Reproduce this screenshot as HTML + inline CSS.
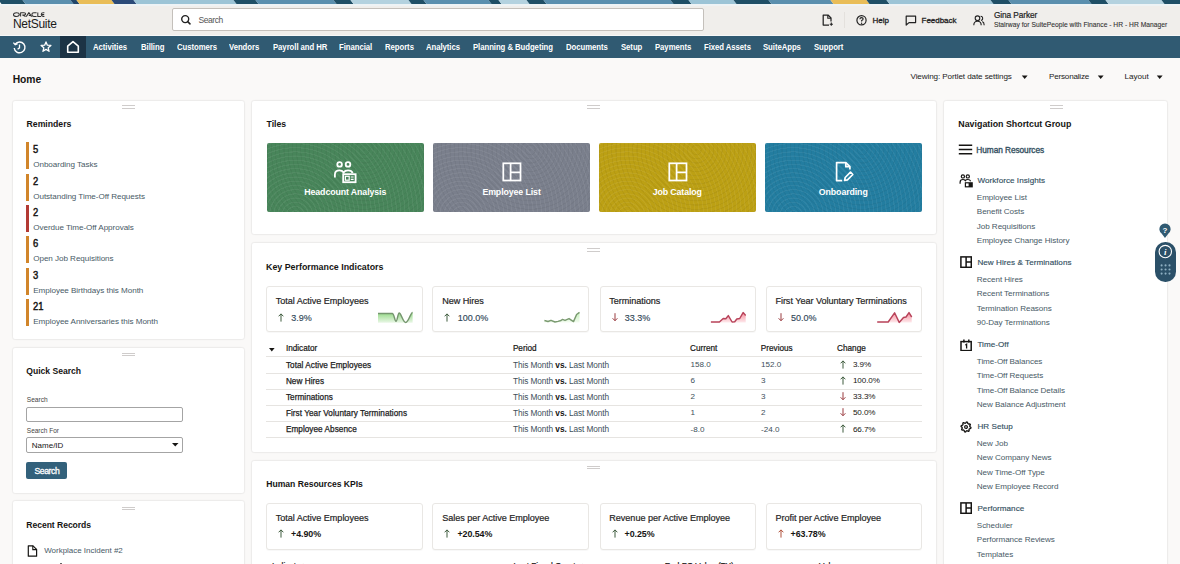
<!DOCTYPE html>
<html><head><meta charset="utf-8"><style>
html,body{margin:0;padding:0;width:1180px;height:564px;overflow:hidden;background:#faf9f8;}
body{position:relative;font-family:"Liberation Sans",sans-serif;}
.t{position:absolute;white-space:nowrap;line-height:1;}
.r{position:absolute;display:block;}
.tile{position:absolute;border-radius:2px;overflow:hidden;}
.sub{position:absolute;background:#fff;border:1px solid #e9e7e4;border-radius:3px;box-sizing:border-box;box-shadow:0 1px 1px rgba(0,0,0,0.03);}
.card{position:absolute;background:#fff;border-radius:2px;box-shadow:0 0 0 1px rgba(0,0,0,0.03),0 0 3px rgba(0,0,0,0.06);}
</style></head><body>
<svg class="r" style="left:0;top:0" width="1180" height="4" viewBox="0 0 1180 4"><polygon points="-1.5,0 22.5,0 25.5,4 1.5,4" fill="#1f4f66"/><polygon points="22.5,0 70.5,0 73.5,4 25.5,4" fill="#5a8fae"/><polygon points="70.5,0 76.5,0 79.5,4 73.5,4" fill="#21466a"/><polygon points="76.5,0 111.5,0 114.5,4 79.5,4" fill="#e9bd58"/><polygon points="111.5,0 133.5,0 136.5,4 114.5,4" fill="#2b4a78"/><polygon points="133.5,0 233.5,0 236.5,4 136.5,4" fill="#9cc4d6"/><polygon points="233.5,0 255.5,0 258.5,4 236.5,4" fill="#1f4f66"/><polygon points="255.5,0 333.5,0 336.5,4 258.5,4" fill="#5a8fae"/><polygon points="333.5,0 350.5,0 353.5,4 336.5,4" fill="#1f4f66"/><polygon points="350.5,0 408.5,0 411.5,4 353.5,4" fill="#b4d2df"/><polygon points="408.5,0 423.5,0 426.5,4 411.5,4" fill="#1f4f66"/><polygon points="423.5,0 488.5,0 491.5,4 426.5,4" fill="#5a8fae"/><polygon points="488.5,0 498.5,0 501.5,4 491.5,4" fill="#1f4f66"/><polygon points="498.5,0 526.5,0 529.5,4 501.5,4" fill="#b4d2df"/><polygon points="526.5,0 543.5,0 546.5,4 529.5,4" fill="#1f4f66"/><polygon points="543.5,0 670.5,0 673.5,4 546.5,4" fill="#5a8fae"/><polygon points="670.5,0 688.5,0 691.5,4 673.5,4" fill="#1f4f66"/><polygon points="688.5,0 733.5,0 736.5,4 691.5,4" fill="#9cc4d6"/><polygon points="733.5,0 768.5,0 771.5,4 736.5,4" fill="#1f4f66"/><polygon points="768.5,0 830.5,0 833.5,4 771.5,4" fill="#5a8fae"/><polygon points="830.5,0 866.5,0 869.5,4 833.5,4" fill="#e9bd58"/><polygon points="866.5,0 886.5,0 889.5,4 869.5,4" fill="#1f4f66"/><polygon points="886.5,0 990.5,0 993.5,4 889.5,4" fill="#9cc4d6"/><polygon points="990.5,0 1008.5,0 1011.5,4 993.5,4" fill="#1f4f66"/><polygon points="1008.5,0 1088.5,0 1091.5,4 1011.5,4" fill="#5a8fae"/><polygon points="1088.5,0 1105.5,0 1108.5,4 1091.5,4" fill="#1f4f66"/><polygon points="1105.5,0 1161.5,0 1164.5,4 1108.5,4" fill="#b4d2df"/><polygon points="1161.5,0 1188.5,0 1191.5,4 1164.5,4" fill="#1f4f66"/></svg>
<div class="r" style="left:0px;top:4px;width:1180px;height:1.5px;background:#eef3f5;"></div>
<div class="r" style="left:0px;top:5.5px;width:1180px;height:30.5px;background:#f0eeeb;"></div>
<div class="r" style="left:0px;top:34.5px;width:1180px;height:1.5px;background:#f7f8f8;"></div>
<svg class="r" style="left:12.6px;top:11.6px;" width="32" height="6" viewBox="0 0 32 6"><g fill="none" stroke="#333" stroke-width="1.05" stroke-linejoin="round"><ellipse cx="3.4" cy="2.6" rx="2.9" ry="1.95"/><path d="M7.6 4.6 V0.65 H11 Q12.6 0.65 12.6 1.85 Q12.6 3.05 11 3.05 H9.6 L12.6 4.6"/><path d="M13.2 4.6 L15.9 0.65 L18.6 4.6 M15.8 3.4 H17.6"/><path d="M23.6 0.65 H21 A2.1 1.95 0 0 0 21 4.55 H23.6"/><path d="M24.8 0.4 V4.55 H28"/><path d="M31.4 0.65 H30.2 A1.95 1.95 0 0 0 30.2 4.55 H31.4 M28.9 2.6 H31.2"/></g></svg>
<div class="t" style="left:13px;top:17.80px;font-size:12px;color:#1a1a1a;letter-spacing:-0.3px;">NetSuite</div>
<div class="r" style="left:172px;top:8px;width:530px;height:21px;background:#fff;border:1px solid #c4c0bb;border-radius:2px;"></div>
<svg class="r" style="left:180px;top:14px;" width="12" height="12" viewBox="0 0 12 12"><circle cx="5.2" cy="5.1" r="3.5" fill="none" stroke="#222" stroke-width="1.4"/><path d="M7.7 7.6 L10 9.9" stroke="#222" stroke-width="1.5" stroke-linecap="round"/></svg>
<div class="t" style="left:198.5px;top:15.97px;font-size:8.5px;color:#555;letter-spacing:-0.45px;">Search</div>
<svg class="r" style="left:821px;top:14px;" width="13" height="12" viewBox="0 0 13 12"><path d="M8 11 H2.2 V1 H7 L10 4 V7.6" fill="none" stroke="#222" stroke-width="1.25" stroke-linejoin="round"/><path d="M6.8 1 V4.2 H10" fill="none" stroke="#222" stroke-width="1.1"/><path d="M10.3 8.6 V11.8 M8.7 10.2 H11.9" stroke="#222" stroke-width="1.1"/></svg>
<div class="r" style="left:843.5px;top:12px;width:1px;height:16px;background:#e4e1dd;"></div>
<svg class="r" style="left:856px;top:15px;" width="12" height="11" viewBox="0 0 12 11"><circle cx="5.5" cy="5.3" r="4.6" fill="none" stroke="#222" stroke-width="1.2"/><path d="M3.9 4.2 Q3.9 2.6 5.5 2.6 Q7.1 2.6 7.1 4 Q7.1 5 5.6 5.6 V6.6" fill="none" stroke="#222" stroke-width="1.1"/><circle cx="5.6" cy="8.2" r="0.7" fill="#222"/></svg>
<div class="t" style="left:872.5px;top:16.60px;font-size:8px;color:#222;letter-spacing:0px;-webkit-text-stroke:0.3px #222;">Help</div>
<svg class="r" style="left:905px;top:15px;" width="12" height="11" viewBox="0 0 12 11"><path d="M1.2 1.2 H10.6 V7.6 H4 L1.2 10 Z" fill="none" stroke="#222" stroke-width="1.2" stroke-linejoin="round"/></svg>
<div class="t" style="left:921.6px;top:16.60px;font-size:8px;color:#222;letter-spacing:-0.05px;-webkit-text-stroke:0.3px #222;">Feedback</div>
<svg class="r" style="left:973px;top:15px;" width="12" height="11" viewBox="0 0 12 11"><circle cx="4.5" cy="3.2" r="2.3" fill="none" stroke="#222" stroke-width="1.1"/><path d="M0.8 10.3 Q0.8 6.3 4.5 6.3 Q8.2 6.3 8.2 10.3" fill="none" stroke="#222" stroke-width="1.1"/><path d="M7.6 1.2 Q10 1.5 9.6 4 Q9.3 5.2 8 5.5 M9.3 6.6 Q11.2 7.5 11.2 10.3" fill="none" stroke="#222" stroke-width="1.1"/></svg>
<div class="t" style="left:994px;top:10.75px;font-size:8.3px;color:#222;letter-spacing:-0.1px;-webkit-text-stroke:0.2px #222;">Gina Parker</div>
<div class="t" style="left:994px;top:22.11px;font-size:6.7px;color:#333;letter-spacing:0.02px;-webkit-text-stroke:0.1px #333;">Stairway for SuitePeople with Finance - HR - HR Manager</div>
<div class="r" style="left:0px;top:36px;width:1180px;height:22px;background:#305a72;"></div>
<div class="r" style="left:59.5px;top:36px;width:26px;height:22px;background:#1c3345;"></div>
<svg class="r" style="left:12px;top:40px;" width="15" height="15" viewBox="0 0 15 15"><path d="M3.2 4.2 A5.4 5.4 0 1 1 2.2 8" fill="none" stroke="#fff" stroke-width="1.4"/><path d="M1.4 2.6 L3.2 4.6 L5.6 3.6" fill="none" stroke="#fff" stroke-width="1.3"/><path d="M7.5 4.5 V7.8 L5.6 9.2" fill="none" stroke="#fff" stroke-width="1.3"/></svg>
<svg class="r" style="left:40px;top:40.5px;" width="12" height="12" viewBox="0 0 12 12"><path d="M6 0.9 L7.35 4.2 L10.9 4.45 L8.2 6.8 L9.05 10.3 L6 8.4 L2.95 10.3 L3.8 6.8 L1.1 4.45 L4.65 4.2 Z" fill="none" stroke="#fff" stroke-width="1.3" stroke-linejoin="round"/></svg>
<svg class="r" style="left:66px;top:40px;" width="14" height="14" viewBox="0 0 14 14"><path d="M1.7 6.2 L7 1.6 L12.3 6.2 V12.3 H1.7 Z" fill="none" stroke="#fff" stroke-width="1.6" stroke-linejoin="round"/></svg>
<div class="t" style="left:93.3px;top:43.19px;font-size:8.6px;font-weight:bold;color:#fff;letter-spacing:-0.05px;transform:scaleX(0.9);transform-origin:0 0;">Activities</div>
<div class="t" style="left:140.5px;top:43.19px;font-size:8.6px;font-weight:bold;color:#fff;letter-spacing:-0.05px;transform:scaleX(0.9);transform-origin:0 0;">Billing</div>
<div class="t" style="left:176.5px;top:43.19px;font-size:8.6px;font-weight:bold;color:#fff;letter-spacing:-0.05px;transform:scaleX(0.9);transform-origin:0 0;">Customers</div>
<div class="t" style="left:229px;top:43.19px;font-size:8.6px;font-weight:bold;color:#fff;letter-spacing:-0.05px;transform:scaleX(0.9);transform-origin:0 0;">Vendors</div>
<div class="t" style="left:272.5px;top:43.19px;font-size:8.6px;font-weight:bold;color:#fff;letter-spacing:-0.05px;transform:scaleX(0.9);transform-origin:0 0;">Payroll and HR</div>
<div class="t" style="left:338.7px;top:43.19px;font-size:8.6px;font-weight:bold;color:#fff;letter-spacing:-0.05px;transform:scaleX(0.9);transform-origin:0 0;">Financial</div>
<div class="t" style="left:384.5px;top:43.19px;font-size:8.6px;font-weight:bold;color:#fff;letter-spacing:-0.05px;transform:scaleX(0.9);transform-origin:0 0;">Reports</div>
<div class="t" style="left:426px;top:43.19px;font-size:8.6px;font-weight:bold;color:#fff;letter-spacing:-0.05px;transform:scaleX(0.9);transform-origin:0 0;">Analytics</div>
<div class="t" style="left:473px;top:43.19px;font-size:8.6px;font-weight:bold;color:#fff;letter-spacing:-0.05px;transform:scaleX(0.9);transform-origin:0 0;">Planning &amp; Budgeting</div>
<div class="t" style="left:565.6px;top:43.19px;font-size:8.6px;font-weight:bold;color:#fff;letter-spacing:-0.05px;transform:scaleX(0.9);transform-origin:0 0;">Documents</div>
<div class="t" style="left:620.5px;top:43.19px;font-size:8.6px;font-weight:bold;color:#fff;letter-spacing:-0.05px;transform:scaleX(0.9);transform-origin:0 0;">Setup</div>
<div class="t" style="left:655.3px;top:43.19px;font-size:8.6px;font-weight:bold;color:#fff;letter-spacing:-0.05px;transform:scaleX(0.9);transform-origin:0 0;">Payments</div>
<div class="t" style="left:704.4px;top:43.19px;font-size:8.6px;font-weight:bold;color:#fff;letter-spacing:-0.05px;transform:scaleX(0.9);transform-origin:0 0;">Fixed Assets</div>
<div class="t" style="left:762.9px;top:43.19px;font-size:8.6px;font-weight:bold;color:#fff;letter-spacing:-0.05px;transform:scaleX(0.9);transform-origin:0 0;">SuiteApps</div>
<div class="t" style="left:813.5px;top:43.19px;font-size:8.6px;font-weight:bold;color:#fff;letter-spacing:-0.05px;transform:scaleX(0.9);transform-origin:0 0;">Support</div>
<div class="r" style="left:0px;top:58px;width:1180px;height:506px;background:#faf9f8;"></div>
<div class="t" style="left:12.7px;top:75.25px;font-size:10.3px;font-weight:bold;color:#161513;letter-spacing:-0.05px;">Home</div>
<div class="t" style="left:910.5px;top:73.21px;font-size:8.1px;color:#222;letter-spacing:-0.1px;">Viewing: Portlet date settings</div>
<svg class="r" style="left:1020.6px;top:74.7px;" width="8" height="5" viewBox="0 0 8 5"><path d="M0.8 0.4 H6.6 L3.7 3.9 Z" fill="#161513"/></svg>
<div class="t" style="left:1049px;top:73.21px;font-size:8.1px;color:#222;letter-spacing:-0.2px;">Personalize</div>
<svg class="r" style="left:1096.8px;top:74.7px;" width="8" height="5" viewBox="0 0 8 5"><path d="M0.8 0.4 H6.6 L3.7 3.9 Z" fill="#161513"/></svg>
<div class="t" style="left:1124.6px;top:73.21px;font-size:8.1px;color:#222;letter-spacing:-0.05px;">Layout</div>
<svg class="r" style="left:1156.4px;top:74.7px;" width="8" height="5" viewBox="0 0 8 5"><path d="M0.8 0.4 H6.6 L3.7 3.9 Z" fill="#161513"/></svg>
<div class="card" style="left:13px;top:100.5px;width:231px;height:238.3px"></div>
<div class="r" style="left:122.0px;top:105px;width:13px;height:1px;background:#cfcccb;"></div>
<div class="r" style="left:122.0px;top:107.5px;width:13px;height:1px;background:#cfcccb;"></div>
<div class="t" style="left:26.6px;top:120.01px;font-size:8.7px;font-weight:bold;color:#161513;letter-spacing:-0.02px;">Reminders</div>
<div class="r" style="left:26px;top:142.3px;width:2.5px;height:27px;background:#d1852a;"></div>
<div class="t" style="left:33.2px;top:145.43px;font-size:10.2px;color:#161513;letter-spacing:0.1px;-webkit-text-stroke:0.45px #161513;transform:scaleX(0.92);transform-origin:0 0;">5</div>
<div class="t" style="left:33.2px;top:161.42px;font-size:8.1px;color:#485a66;letter-spacing:-0.05px;">Onboarding Tasks</div>
<div class="r" style="left:26px;top:173.6px;width:2.5px;height:27px;background:#d1852a;"></div>
<div class="t" style="left:33.2px;top:176.73px;font-size:10.2px;color:#161513;letter-spacing:0.1px;-webkit-text-stroke:0.45px #161513;transform:scaleX(0.92);transform-origin:0 0;">2</div>
<div class="t" style="left:33.2px;top:192.72px;font-size:8.1px;color:#485a66;letter-spacing:-0.05px;">Outstanding Time-Off Requests</div>
<div class="r" style="left:26px;top:204.9px;width:2.5px;height:27px;background:#b33a34;"></div>
<div class="t" style="left:33.2px;top:208.03px;font-size:10.2px;color:#161513;letter-spacing:0.1px;-webkit-text-stroke:0.45px #161513;transform:scaleX(0.92);transform-origin:0 0;">2</div>
<div class="t" style="left:33.2px;top:224.02px;font-size:8.1px;color:#485a66;letter-spacing:-0.05px;">Overdue Time-Off Approvals</div>
<div class="r" style="left:26px;top:236.2px;width:2.5px;height:27px;background:#d1852a;"></div>
<div class="t" style="left:33.2px;top:239.33px;font-size:10.2px;color:#161513;letter-spacing:0.1px;-webkit-text-stroke:0.45px #161513;transform:scaleX(0.92);transform-origin:0 0;">6</div>
<div class="t" style="left:33.2px;top:255.32px;font-size:8.1px;color:#485a66;letter-spacing:-0.05px;">Open Job Requisitions</div>
<div class="r" style="left:26px;top:267.5px;width:2.5px;height:27px;background:#d1852a;"></div>
<div class="t" style="left:33.2px;top:270.63px;font-size:10.2px;color:#161513;letter-spacing:0.1px;-webkit-text-stroke:0.45px #161513;transform:scaleX(0.92);transform-origin:0 0;">3</div>
<div class="t" style="left:33.2px;top:286.62px;font-size:8.1px;color:#485a66;letter-spacing:-0.05px;">Employee Birthdays this Month</div>
<div class="r" style="left:26px;top:298.8px;width:2.5px;height:27px;background:#d1852a;"></div>
<div class="t" style="left:33.2px;top:301.93px;font-size:10.2px;color:#161513;letter-spacing:0.1px;-webkit-text-stroke:0.45px #161513;transform:scaleX(0.92);transform-origin:0 0;">21</div>
<div class="t" style="left:33.2px;top:317.92px;font-size:8.1px;color:#485a66;letter-spacing:-0.05px;">Employee Anniversaries this Month</div>
<div class="card" style="left:13px;top:347.5px;width:231px;height:145px"></div>
<div class="r" style="left:122.0px;top:352.8px;width:13px;height:1px;background:#cfcccb;"></div>
<div class="r" style="left:122.0px;top:355.3px;width:13px;height:1px;background:#cfcccb;"></div>
<div class="t" style="left:26.3px;top:367.39px;font-size:8.6px;font-weight:bold;color:#161513;letter-spacing:-0.02px;">Quick Search</div>
<div class="t" style="left:26.8px;top:396.89px;font-size:6.6px;color:#444;">Search</div>
<div class="r" style="left:26.3px;top:406.5px;width:155px;height:13px;background:#fff;border:1px solid #a4a4a4;border-radius:2px;"></div>
<div class="t" style="left:26.8px;top:427.88px;font-size:6.5px;color:#444;">Search For</div>
<div class="r" style="left:26.3px;top:437.2px;width:155px;height:14px;background:#fff;border:1px solid #a4a4a4;border-radius:2px;"></div>
<div class="t" style="left:31.8px;top:441.50px;font-size:8px;color:#161513;">Name/ID</div>
<svg class="r" style="left:171.5px;top:443px;" width="7" height="4" viewBox="0 0 7 4"><path d="M0 0 H6.5 L3.25 3.5 Z" fill="#161513"/></svg>
<div class="r" style="left:26.3px;top:462px;width:41px;height:17px;background:#33617b;border-radius:2px;"></div>
<div class="t" style="left:34.5px;top:466.99px;font-size:8.6px;color:#fff;letter-spacing:-0.4px;-webkit-text-stroke:0.3px #fff;">Search</div>
<div class="card" style="left:13px;top:501.2px;width:231px;height:70px"></div>
<div class="r" style="left:122.0px;top:506.5px;width:13px;height:1px;background:#cfcccb;"></div>
<div class="r" style="left:122.0px;top:509.0px;width:13px;height:1px;background:#cfcccb;"></div>
<div class="t" style="left:26.3px;top:520.99px;font-size:8.6px;font-weight:bold;color:#161513;letter-spacing:-0.05px;">Recent Records</div>
<svg class="r" style="left:27px;top:545px;" width="11" height="12" viewBox="0 0 11 12"><path d="M1.3 0.8 H6 L9.6 4.4 V11.2 H1.3 Z" fill="none" stroke="#161513" stroke-width="1.2" stroke-linejoin="round"/><path d="M5.8 0.8 V4.6 H9.6" fill="none" stroke="#161513" stroke-width="1.1"/></svg>
<div class="t" style="left:44.2px;top:547.00px;font-size:8px;color:#485a66;letter-spacing:-0.02px;">Workplace Incident #2</div>
<div class="card" style="left:251.5px;top:100.5px;width:684px;height:133.5px"></div>
<div class="r" style="left:587.0px;top:105px;width:13px;height:1px;background:#cfcccb;"></div>
<div class="r" style="left:587.0px;top:107.5px;width:13px;height:1px;background:#cfcccb;"></div>
<div class="t" style="left:266.5px;top:119.61px;font-size:8.7px;font-weight:bold;color:#161513;">Tiles</div>
<div class="card" style="left:251.5px;top:242.7px;width:684px;height:209px"></div>
<div class="r" style="left:587.0px;top:248px;width:13px;height:1px;background:#cfcccb;"></div>
<div class="r" style="left:587.0px;top:250.5px;width:13px;height:1px;background:#cfcccb;"></div>
<div class="card" style="left:251.5px;top:460.5px;width:684px;height:120px"></div>
<div class="r" style="left:587.0px;top:465.5px;width:13px;height:1px;background:#cfcccb;"></div>
<div class="r" style="left:587.0px;top:468.0px;width:13px;height:1px;background:#cfcccb;"></div>
<div class="card" style="left:944px;top:100.5px;width:222.7px;height:480px"></div>
<div class="r" style="left:1049.5px;top:105.2px;width:13px;height:1px;background:#cfcccb;"></div>
<div class="r" style="left:1049.5px;top:107.7px;width:13px;height:1px;background:#cfcccb;"></div>
<div class="t" style="left:958.3px;top:120.18px;font-size:8.85px;font-weight:bold;color:#161513;">Navigation Shortcut Group</div>
<div class="tile" style="left:267px;top:143px;width:156.5px;height:68.7px;background:repeating-radial-gradient(circle at 18% 105%, rgba(255,255,255,0.055) 0 1px, rgba(255,255,255,0) 1.3px 4.2px), repeating-radial-gradient(circle at 62% 10%, rgba(0,0,0,0.045) 0 1px, rgba(0,0,0,0) 1.3px 4.2px),#48855a;"></div>
<div class="t" style="left:267px;top:187.82px;font-size:8.8px;font-weight:bold;color:#fff;letter-spacing:-0.1px;"><div style="width:156.5px;text-align:center">Headcount Analysis</div></div>
<div class="tile" style="left:433.3px;top:143px;width:156.5px;height:68.7px;background:repeating-radial-gradient(circle at 18% 105%, rgba(255,255,255,0.055) 0 1px, rgba(255,255,255,0) 1.3px 4.2px), repeating-radial-gradient(circle at 62% 10%, rgba(0,0,0,0.045) 0 1px, rgba(0,0,0,0) 1.3px 4.2px),#7a7f8c;"></div>
<div class="t" style="left:433.3px;top:187.82px;font-size:8.8px;font-weight:bold;color:#fff;letter-spacing:-0.1px;"><div style="width:156.5px;text-align:center">Employee List</div></div>
<div class="tile" style="left:599px;top:143px;width:156.5px;height:68.7px;background:repeating-radial-gradient(circle at 18% 105%, rgba(255,255,255,0.055) 0 1px, rgba(255,255,255,0) 1.3px 4.2px), repeating-radial-gradient(circle at 62% 10%, rgba(0,0,0,0.045) 0 1px, rgba(0,0,0,0) 1.3px 4.2px),#bca014;"></div>
<div class="t" style="left:599px;top:187.82px;font-size:8.8px;font-weight:bold;color:#fff;letter-spacing:-0.1px;"><div style="width:156.5px;text-align:center">Job Catalog</div></div>
<div class="tile" style="left:765px;top:143px;width:156.5px;height:68.7px;background:repeating-radial-gradient(circle at 18% 105%, rgba(255,255,255,0.055) 0 1px, rgba(255,255,255,0) 1.3px 4.2px), repeating-radial-gradient(circle at 62% 10%, rgba(0,0,0,0.045) 0 1px, rgba(0,0,0,0) 1.3px 4.2px),#237da0;"></div>
<div class="t" style="left:765px;top:187.82px;font-size:8.8px;font-weight:bold;color:#fff;letter-spacing:-0.1px;"><div style="width:156.5px;text-align:center">Onboarding</div></div>
<svg class="r" style="left:333px;top:160px;" width="25" height="24" viewBox="0 0 25 24"><g fill="none" stroke="#fff" stroke-width="1.8"><circle cx="6.6" cy="4.4" r="2.3"/><circle cx="15" cy="4.4" r="2.3"/><path d="M1.9 17.5 V14.6 Q1.9 10.4 6.6 10.4 Q9.2 10.4 10.6 12.4 Q12 10.4 15 10.4 Q18.6 10.4 19.6 13"/><rect x="10.2" y="14.2" width="12.4" height="8" fill="#48855a"/></g><rect x="12.4" y="16.3" width="3.8" height="3.9" fill="none" stroke="#fff" stroke-width="1.2"/><path d="M17.8 17 H20.6 M17.8 19.4 H20.6" stroke="#fff" stroke-width="1.1"/></svg>
<svg class="r" style="left:501.6px;top:161.5px;" width="20" height="20" viewBox="0 0 20 20"><g fill="none" stroke="#fff" stroke-width="1.75"><rect x="1.3" y="1.3" width="17.2" height="17.2"/><path d="M8.6 1.3 V18.5 M8.6 10.3 H18.5"/></g></svg>
<svg class="r" style="left:667.7px;top:161.5px;" width="20" height="20" viewBox="0 0 20 20"><g fill="none" stroke="#fff" stroke-width="1.75"><rect x="1.3" y="1.3" width="17.2" height="17.2"/><path d="M8.6 1.3 V18.5 M8.6 10.3 H18.5"/></g></svg>
<svg class="r" style="left:834px;top:161px;" width="21" height="21" viewBox="0 0 21 21"><g fill="none" stroke="#fff" stroke-width="1.7" stroke-linejoin="round"><path d="M8.2 19.6 H2.6 V1.6 H11.8 L15.9 5.7 V8.6"/><path d="M11.8 1.6 V5.7 H15.9"/><path d="M10.6 19.5 L11.2 16.5 L16.5 11.2 L18.8 13.5 L13.5 18.8 Z"/></g></svg>
<div class="t" style="left:266px;top:262.58px;font-size:8.85px;font-weight:bold;color:#161513;">Key Performance Indicators</div>
<div class="sub" style="left:266px;top:286.2px;width:156.5px;height:46px"></div>
<div class="t" style="left:275.8px;top:296.76px;font-size:9.1px;color:#252525;letter-spacing:-0.04px;-webkit-text-stroke:0.2px #252525;">Total Active Employees</div>
<svg class="r" style="left:278px;top:312.8px;" width="6" height="9.6" viewBox="0 0 6 9.6"><path d="M3 8.6 V0.9 M0.6 3.3 L3 0.9 L5.4 3.3" fill="none" stroke="#3d5a3c" stroke-width="1"/></svg>
<div class="t" style="left:291.3px;top:313.55px;font-size:9px;color:#33495a;letter-spacing:0px;-webkit-text-stroke:0.15px #33495a;">3.9%</div>
<div class="sub" style="left:432.4px;top:286.2px;width:156.5px;height:46px"></div>
<div class="t" style="left:442.2px;top:296.76px;font-size:9.1px;color:#252525;letter-spacing:-0.04px;-webkit-text-stroke:0.2px #252525;">New Hires</div>
<svg class="r" style="left:444.4px;top:312.8px;" width="6" height="9.6" viewBox="0 0 6 9.6"><path d="M3 8.6 V0.9 M0.6 3.3 L3 0.9 L5.4 3.3" fill="none" stroke="#3d5a3c" stroke-width="1"/></svg>
<div class="t" style="left:457.7px;top:313.55px;font-size:9px;color:#33495a;letter-spacing:0px;-webkit-text-stroke:0.15px #33495a;">100.0%</div>
<div class="sub" style="left:599.5px;top:286.2px;width:156.5px;height:46px"></div>
<div class="t" style="left:609.3px;top:296.76px;font-size:9.1px;color:#252525;letter-spacing:-0.04px;-webkit-text-stroke:0.2px #252525;">Terminations</div>
<svg class="r" style="left:611.5px;top:312.8px;" width="6" height="9.6" viewBox="0 0 6 9.6"><path d="M3 0.2 V7.699999999999999 M0.6 5.3 L3 7.699999999999999 L5.4 5.3" fill="none" stroke="#9a3a3e" stroke-width="1"/></svg>
<div class="t" style="left:624.8px;top:313.55px;font-size:9px;color:#33495a;letter-spacing:0px;-webkit-text-stroke:0.15px #33495a;">33.3%</div>
<div class="sub" style="left:765.6px;top:286.2px;width:156.5px;height:46px"></div>
<div class="t" style="left:775.4px;top:296.76px;font-size:9.1px;color:#252525;letter-spacing:-0.04px;-webkit-text-stroke:0.2px #252525;">First Year Voluntary Terminations</div>
<svg class="r" style="left:777.6px;top:312.8px;" width="6" height="9.6" viewBox="0 0 6 9.6"><path d="M3 0.2 V7.699999999999999 M0.6 5.3 L3 7.699999999999999 L5.4 5.3" fill="none" stroke="#9a3a3e" stroke-width="1"/></svg>
<div class="t" style="left:790.9px;top:313.55px;font-size:9px;color:#33495a;letter-spacing:0px;-webkit-text-stroke:0.15px #33495a;">50.0%</div>
<svg class="r" style="left:0;top:0" width="1180" height="564"><defs><linearGradient id="g129" x1="0" y1="0" x2="0" y2="1"><stop offset="0" stop-color="#93d884" stop-opacity="1"/><stop offset="1" stop-color="#93d884" stop-opacity="0.2"/></linearGradient></defs><path d="M378 313.5 H392.3 C394.2 313.5 394.6 321.2 396 321.2 C397.4 321.2 397.8 313 399.2 313 C401.2 313 402.8 322.4 405.8 322.4 C408.6 322.4 410.6 312.5 412.6 312.5 L412.6,322.8 L378,322.8 Z" fill="url(#g129)"/><path d="M378 313.5 H392.3 C394.2 313.5 394.6 321.2 396 321.2 C397.4 321.2 397.8 313 399.2 313 C401.2 313 402.8 322.4 405.8 322.4 C408.6 322.4 410.6 312.5 412.6 312.5" fill="none" stroke="#76966f" stroke-width="1.45" stroke-linejoin="round"/></svg>
<svg class="r" style="left:0;top:0" width="1180" height="564"><defs><linearGradient id="g130" x1="0" y1="0" x2="0" y2="1"><stop offset="0" stop-color="#c4efb8" stop-opacity="1"/><stop offset="1" stop-color="#c4efb8" stop-opacity="0.2"/></linearGradient></defs><path d="M544.4,320.5 L548,321.5 L551,320.3 L555,322 L558,321.4 L561,320.5 L562.5,319.4 L565,320.4 L569,318.6 L573.5,321.6 L576.6,314.5 L579.5,312.3 L579.5,322.5 L544.4,322.5 Z" fill="url(#g130)"/><path d="M544.4,320.5 L548,321.5 L551,320.3 L555,322 L558,321.4 L561,320.5 L562.5,319.4 L565,320.4 L569,318.6 L573.5,321.6 L576.6,314.5 L579.5,312.3" fill="none" stroke="#7a9a70" stroke-width="1.45" stroke-linejoin="round"/></svg>
<svg class="r" style="left:0;top:0" width="1180" height="564"><defs><linearGradient id="g131" x1="0" y1="0" x2="0" y2="1"><stop offset="0" stop-color="#f7909e" stop-opacity="1"/><stop offset="1" stop-color="#f7909e" stop-opacity="0.2"/></linearGradient></defs><path d="M710.9,322 L719.4,322 L723.2,318.5 L725.8,318.8 L728.3,315.6 L732.1,322 L734.7,321.8 L736.8,319 L739.7,318.5 L743.1,312.6 L745.7,315.5 L745.7,322.5 L710.9,322.5 Z" fill="url(#g131)"/><path d="M710.9,322 L719.4,322 L723.2,318.5 L725.8,318.8 L728.3,315.6 L732.1,322 L734.7,321.8 L736.8,319 L739.7,318.5 L743.1,312.6 L745.7,315.5" fill="none" stroke="#b8435a" stroke-width="1.45" stroke-linejoin="round"/></svg>
<svg class="r" style="left:0;top:0" width="1180" height="564"><defs><linearGradient id="g132" x1="0" y1="0" x2="0" y2="1"><stop offset="0" stop-color="#f7909e" stop-opacity="1"/><stop offset="1" stop-color="#f7909e" stop-opacity="0.2"/></linearGradient></defs><path d="M877.2,322 L888.2,322 L894.6,312.8 L899.2,322.4 L903.5,317.5 L906,317 L909,312.6 L911.7,317 L911.7,322.5 L877.2,322.5 Z" fill="url(#g132)"/><path d="M877.2,322 L888.2,322 L894.6,312.8 L899.2,322.4 L903.5,317.5 L906,317 L909,312.6 L911.7,317" fill="none" stroke="#b8435a" stroke-width="1.45" stroke-linejoin="round"/></svg>
<svg class="r" style="left:268.5px;top:347.5px;" width="6" height="4" viewBox="0 0 6 4"><path d="M0 0 H5.6 L2.8 3.4 Z" fill="#161513"/></svg>
<div class="t" style="left:285.9px;top:344.93px;font-size:8.2px;color:#161513;letter-spacing:0px;-webkit-text-stroke:0.2px #161513;">Indicator</div>
<div class="t" style="left:512.9px;top:344.93px;font-size:8.2px;color:#161513;letter-spacing:0px;-webkit-text-stroke:0.2px #161513;">Period</div>
<div class="t" style="left:690.1px;top:344.93px;font-size:8.2px;color:#161513;letter-spacing:0px;-webkit-text-stroke:0.2px #161513;">Current</div>
<div class="t" style="left:760.8px;top:344.93px;font-size:8.2px;color:#161513;letter-spacing:0px;-webkit-text-stroke:0.2px #161513;">Previous</div>
<div class="t" style="left:837.1px;top:344.93px;font-size:8.2px;color:#161513;letter-spacing:0px;-webkit-text-stroke:0.2px #161513;">Change</div>
<div class="r" style="left:265.6px;top:356.4px;width:656.6px;height:1px;background:#e6e4e1;"></div>
<div class="r" style="left:265.6px;top:372.5px;width:656.6px;height:1px;background:#e6e4e1;"></div>
<div class="r" style="left:265.6px;top:388.6px;width:656.6px;height:1px;background:#e6e4e1;"></div>
<div class="r" style="left:265.6px;top:404.7px;width:656.6px;height:1px;background:#e6e4e1;"></div>
<div class="r" style="left:265.6px;top:420.8px;width:656.6px;height:1px;background:#e6e4e1;"></div>
<div class="r" style="left:265.6px;top:436.9px;width:656.6px;height:1px;background:#e6e4e1;"></div>
<div class="t" style="left:285.9px;top:361.73px;font-size:8.2px;color:#1e1e1e;letter-spacing:0.05px;-webkit-text-stroke:0.25px #1e1e1e;">Total Active Employees</div>
<div class="t" style="left:512.9px;top:360.94px;font-size:8.3px;color:#3e4f5a;letter-spacing:-0.08px;">This Month <b style="color:#161513">vs.</b> Last Month</div>
<div class="t" style="left:690.5px;top:361.12px;font-size:8.1px;color:#3e4f5a;">158.0</div>
<div class="t" style="left:761px;top:361.12px;font-size:8.1px;color:#3e4f5a;">152.0</div>
<svg class="r" style="left:839.6px;top:359.8px;" width="6" height="9.6" viewBox="0 0 6 9.6"><path d="M3 8.6 V0.9 M0.6 3.3 L3 0.9 L5.4 3.3" fill="none" stroke="#3d5a3c" stroke-width="1"/></svg>
<div class="t" style="left:852.9px;top:361.12px;font-size:8.1px;color:#161513;letter-spacing:-0.08px;">3.9%</div>
<div class="t" style="left:285.9px;top:377.83px;font-size:8.2px;color:#1e1e1e;letter-spacing:0.05px;-webkit-text-stroke:0.25px #1e1e1e;">New Hires</div>
<div class="t" style="left:512.9px;top:377.05px;font-size:8.3px;color:#3e4f5a;letter-spacing:-0.08px;">This Month <b style="color:#161513">vs.</b> Last Month</div>
<div class="t" style="left:690.5px;top:377.22px;font-size:8.1px;color:#3e4f5a;">6</div>
<div class="t" style="left:761px;top:377.22px;font-size:8.1px;color:#3e4f5a;">3</div>
<svg class="r" style="left:839.6px;top:375.90000000000003px;" width="6" height="9.6" viewBox="0 0 6 9.6"><path d="M3 8.6 V0.9 M0.6 3.3 L3 0.9 L5.4 3.3" fill="none" stroke="#3d5a3c" stroke-width="1"/></svg>
<div class="t" style="left:852.9px;top:377.22px;font-size:8.1px;color:#161513;letter-spacing:-0.08px;">100.0%</div>
<div class="t" style="left:285.9px;top:393.93px;font-size:8.2px;color:#1e1e1e;letter-spacing:0.05px;-webkit-text-stroke:0.25px #1e1e1e;">Terminations</div>
<div class="t" style="left:512.9px;top:393.14px;font-size:8.3px;color:#3e4f5a;letter-spacing:-0.08px;">This Month <b style="color:#161513">vs.</b> Last Month</div>
<div class="t" style="left:690.5px;top:393.31px;font-size:8.1px;color:#3e4f5a;">2</div>
<div class="t" style="left:761px;top:393.31px;font-size:8.1px;color:#3e4f5a;">3</div>
<svg class="r" style="left:839.6px;top:392.0px;" width="6" height="9.6" viewBox="0 0 6 9.6"><path d="M3 0.2 V7.699999999999999 M0.6 5.3 L3 7.699999999999999 L5.4 5.3" fill="none" stroke="#9a3a3e" stroke-width="1"/></svg>
<div class="t" style="left:852.9px;top:393.31px;font-size:8.1px;color:#161513;letter-spacing:-0.08px;">33.3%</div>
<div class="t" style="left:285.9px;top:410.03px;font-size:8.2px;color:#1e1e1e;letter-spacing:0.05px;-webkit-text-stroke:0.25px #1e1e1e;">First Year Voluntary Terminations</div>
<div class="t" style="left:512.9px;top:409.25px;font-size:8.3px;color:#3e4f5a;letter-spacing:-0.08px;">This Month <b style="color:#161513">vs.</b> Last Month</div>
<div class="t" style="left:690.5px;top:409.42px;font-size:8.1px;color:#3e4f5a;">1</div>
<div class="t" style="left:761px;top:409.42px;font-size:8.1px;color:#3e4f5a;">2</div>
<svg class="r" style="left:839.6px;top:408.1px;" width="6" height="9.6" viewBox="0 0 6 9.6"><path d="M3 0.2 V7.699999999999999 M0.6 5.3 L3 7.699999999999999 L5.4 5.3" fill="none" stroke="#9a3a3e" stroke-width="1"/></svg>
<div class="t" style="left:852.9px;top:409.42px;font-size:8.1px;color:#161513;letter-spacing:-0.08px;">50.0%</div>
<div class="t" style="left:285.9px;top:426.13px;font-size:8.2px;color:#1e1e1e;letter-spacing:0.05px;-webkit-text-stroke:0.25px #1e1e1e;">Employee Absence</div>
<div class="t" style="left:512.9px;top:425.34px;font-size:8.3px;color:#3e4f5a;letter-spacing:-0.08px;">This Month <b style="color:#161513">vs.</b> Last Month</div>
<div class="t" style="left:690.5px;top:425.51px;font-size:8.1px;color:#3e4f5a;">-8.0</div>
<div class="t" style="left:761px;top:425.51px;font-size:8.1px;color:#3e4f5a;">-24.0</div>
<svg class="r" style="left:839.6px;top:424.2px;" width="6" height="9.6" viewBox="0 0 6 9.6"><path d="M3 8.6 V0.9 M0.6 3.3 L3 0.9 L5.4 3.3" fill="none" stroke="#3d5a3c" stroke-width="1"/></svg>
<div class="t" style="left:852.9px;top:425.51px;font-size:8.1px;color:#161513;letter-spacing:-0.08px;">66.7%</div>
<div class="t" style="left:266.3px;top:479.89px;font-size:8.6px;font-weight:bold;color:#161513;letter-spacing:-0.02px;">Human Resources KPIs</div>
<div class="sub" style="left:266px;top:503px;width:156.5px;height:46.5px"></div>
<div class="t" style="left:275.8px;top:513.97px;font-size:9.1px;color:#252525;letter-spacing:-0.04px;-webkit-text-stroke:0.2px #252525;">Total Active Employees</div>
<svg class="r" style="left:278px;top:529.4px;" width="6" height="9.6" viewBox="0 0 6 9.6"><path d="M3 8.6 V0.9 M0.6 3.3 L3 0.9 L5.4 3.3" fill="none" stroke="#3d5a3c" stroke-width="1"/></svg>
<div class="t" style="left:291px;top:530.33px;font-size:8.9px;font-weight:bold;color:#161513;letter-spacing:-0.05px;">+4.90%</div>
<div class="sub" style="left:432.4px;top:503px;width:156.5px;height:46.5px"></div>
<div class="t" style="left:442.2px;top:513.97px;font-size:9.1px;color:#252525;letter-spacing:-0.04px;-webkit-text-stroke:0.2px #252525;">Sales per Active Employee</div>
<svg class="r" style="left:444.4px;top:529.4px;" width="6" height="9.6" viewBox="0 0 6 9.6"><path d="M3 8.6 V0.9 M0.6 3.3 L3 0.9 L5.4 3.3" fill="none" stroke="#3d5a3c" stroke-width="1"/></svg>
<div class="t" style="left:457.4px;top:530.33px;font-size:8.9px;font-weight:bold;color:#161513;letter-spacing:-0.05px;">+20.54%</div>
<div class="sub" style="left:599.5px;top:503px;width:156.5px;height:46.5px"></div>
<div class="t" style="left:609.3px;top:513.97px;font-size:9.1px;color:#252525;letter-spacing:-0.04px;-webkit-text-stroke:0.2px #252525;">Revenue per Active Employee</div>
<svg class="r" style="left:611.5px;top:529.4px;" width="6" height="9.6" viewBox="0 0 6 9.6"><path d="M3 8.6 V0.9 M0.6 3.3 L3 0.9 L5.4 3.3" fill="none" stroke="#3d5a3c" stroke-width="1"/></svg>
<div class="t" style="left:624.5px;top:530.33px;font-size:8.9px;font-weight:bold;color:#161513;letter-spacing:-0.05px;">+0.25%</div>
<div class="sub" style="left:765.6px;top:503px;width:156.5px;height:46.5px"></div>
<div class="t" style="left:775.4px;top:513.97px;font-size:9.1px;color:#252525;letter-spacing:-0.04px;-webkit-text-stroke:0.2px #252525;">Profit per Active Employee</div>
<svg class="r" style="left:777.6px;top:529.4px;" width="6" height="9.6" viewBox="0 0 6 9.6"><path d="M3 8.6 V0.9 M0.6 3.3 L3 0.9 L5.4 3.3" fill="none" stroke="#b0503a" stroke-width="1"/></svg>
<div class="t" style="left:790.6px;top:530.33px;font-size:8.9px;font-weight:bold;color:#161513;letter-spacing:-0.05px;">+63.78%</div>
<div class="t" style="left:272px;top:563.03px;font-size:8.2px;color:#161513;letter-spacing:0px;-webkit-text-stroke:0.2px #161513;">Indicator</div>
<div class="t" style="left:513.6px;top:563.03px;font-size:8.2px;color:#161513;letter-spacing:0px;-webkit-text-stroke:0.2px #161513;">Last Fiscal Quarter</div>
<div class="t" style="left:664.8px;top:563.03px;font-size:8.2px;color:#161513;letter-spacing:0px;-webkit-text-stroke:0.2px #161513;">End FQ Value (TY)</div>
<div class="t" style="left:819px;top:563.03px;font-size:8.2px;color:#161513;letter-spacing:0px;-webkit-text-stroke:0.2px #161513;">Value</div>
<div class="r" style="left:60px;top:562.6px;width:1.6px;height:1.4px;background:#666;"></div>
<svg class="r" style="left:957.5px;top:144px;" width="15" height="11" viewBox="0 0 15 11"><path d="M0.8 1.3 H14.2 M0.8 5.5 H14.2 M0.8 9.7 H14.2" stroke="#161513" stroke-width="1.6"/></svg>
<div class="t" style="left:976.3px;top:146.14px;font-size:8.3px;color:#34505f;letter-spacing:-0.06px;-webkit-text-stroke:0.35px #34505f;">Human Resources</div>
<div class="t" style="left:977.4px;top:176.62px;font-size:8.1px;color:#34505f;letter-spacing:0.05px;-webkit-text-stroke:0.15px #34505f;">Workforce Insights</div>
<div class="t" style="left:976.8px;top:193.62px;font-size:8.1px;color:#485a66;letter-spacing:-0.06px;">Employee List</div>
<div class="t" style="left:976.8px;top:208.06px;font-size:8.1px;color:#485a66;letter-spacing:-0.06px;">Benefit Costs</div>
<div class="t" style="left:976.8px;top:222.52px;font-size:8.1px;color:#485a66;letter-spacing:-0.06px;">Job Requisitions</div>
<div class="t" style="left:976.8px;top:236.97px;font-size:8.1px;color:#485a66;letter-spacing:-0.06px;">Employee Change History</div>
<svg class="r" style="left:958.5px;top:174px;" width="15" height="14" viewBox="0 0 15 14"><g fill="none" stroke="#161513" stroke-width="1.2"><circle cx="3.9" cy="2.4" r="1.6"/><circle cx="8.8" cy="2.4" r="1.6"/><path d="M1.1 9.8 V8.4 Q1.1 5.5 3.9 5.5 Q5.6 5.5 6.3 6.6 Q7 5.5 8.8 5.5 Q11 5.5 11.6 7.2"/></g><rect x="5.8" y="8.2" width="8" height="5.2" fill="#161513"/><rect x="7" y="9.4" width="2.6" height="2.8" fill="#fff"/></svg>
<div class="t" style="left:977.4px;top:258.62px;font-size:8.1px;color:#34505f;letter-spacing:0.05px;-webkit-text-stroke:0.15px #34505f;">New Hires &amp; Terminations</div>
<div class="t" style="left:976.8px;top:275.62px;font-size:8.1px;color:#485a66;letter-spacing:-0.06px;">Recent Hires</div>
<div class="t" style="left:976.8px;top:290.06px;font-size:8.1px;color:#485a66;letter-spacing:-0.06px;">Recent Terminations</div>
<div class="t" style="left:976.8px;top:304.51px;font-size:8.1px;color:#485a66;letter-spacing:-0.06px;">Termination Reasons</div>
<div class="t" style="left:976.8px;top:318.97px;font-size:8.1px;color:#485a66;letter-spacing:-0.06px;">90-Day Terminations</div>
<svg class="r" style="left:959.5px;top:256.2px;" width="12.5" height="12" viewBox="0 0 12.5 12"><g fill="none" stroke="#161513" stroke-width="1.5"><rect x="0.9" y="0.9" width="10.4" height="10.4"/><path d="M6.1 0.9 V11.3 M6.1 6 H11.3"/></g></svg>
<div class="t" style="left:977.4px;top:340.62px;font-size:8.1px;color:#34505f;letter-spacing:0.05px;-webkit-text-stroke:0.15px #34505f;">Time-Off</div>
<div class="t" style="left:976.8px;top:357.62px;font-size:8.1px;color:#485a66;letter-spacing:-0.06px;">Time-Off Balances</div>
<div class="t" style="left:976.8px;top:372.06px;font-size:8.1px;color:#485a66;letter-spacing:-0.06px;">Time-Off Requests</div>
<div class="t" style="left:976.8px;top:386.51px;font-size:8.1px;color:#485a66;letter-spacing:-0.06px;">Time-Off Balance Details</div>
<div class="t" style="left:976.8px;top:400.97px;font-size:8.1px;color:#485a66;letter-spacing:-0.06px;">New Balance Adjustment</div>
<svg class="r" style="left:959.5px;top:338.5px;" width="12.5" height="12.5" viewBox="0 0 12.5 12.5"><g fill="none" stroke="#161513" stroke-width="1.5"><rect x="1" y="2.6" width="10.2" height="9"/><path d="M3.9 0.6 V3.6 M8.8 0.6 V3.6"/></g><path d="M5.4 6.1 L6.6 5.3 V9.6" fill="none" stroke="#161513" stroke-width="1.3"/></svg>
<div class="t" style="left:977.4px;top:422.62px;font-size:8.1px;color:#34505f;letter-spacing:0.05px;-webkit-text-stroke:0.15px #34505f;">HR Setup</div>
<div class="t" style="left:976.8px;top:439.62px;font-size:8.1px;color:#485a66;letter-spacing:-0.06px;">New Job</div>
<div class="t" style="left:976.8px;top:454.06px;font-size:8.1px;color:#485a66;letter-spacing:-0.06px;">New Company News</div>
<div class="t" style="left:976.8px;top:468.51px;font-size:8.1px;color:#485a66;letter-spacing:-0.06px;">New Time-Off Type</div>
<div class="t" style="left:976.8px;top:482.97px;font-size:8.1px;color:#485a66;letter-spacing:-0.06px;">New Employee Record</div>
<svg class="r" style="left:959.6px;top:421.1px;" width="12" height="12" viewBox="0 0 12 12"><path d="M10.98 6.49 L10.78 7.45 L9.44 7.84 L9.01 8.47 L9.17 9.87 L8.36 10.41 L7.13 9.73 L6.38 9.88 L5.51 10.98 L4.55 10.78 L4.16 9.44 L3.53 9.01 L2.13 9.17 L1.59 8.36 L2.27 7.13 L2.12 6.38 L1.02 5.51 L1.22 4.55 L2.56 4.16 L2.99 3.53 L2.83 2.13 L3.64 1.59 L4.87 2.27 L5.62 2.12 L6.49 1.02 L7.45 1.22 L7.84 2.56 L8.47 2.99 L9.87 2.83 L10.41 3.64 L9.73 4.87 L9.88 5.62 Z" fill="none" stroke="#161513" stroke-width="1.3" stroke-linejoin="round"/><circle cx="6" cy="6" r="1.4" fill="none" stroke="#161513" stroke-width="1.2"/></svg>
<div class="t" style="left:977.4px;top:504.62px;font-size:8.1px;color:#34505f;letter-spacing:0.05px;-webkit-text-stroke:0.15px #34505f;">Performance</div>
<div class="t" style="left:976.8px;top:521.62px;font-size:8.1px;color:#485a66;letter-spacing:-0.06px;">Scheduler</div>
<div class="t" style="left:976.8px;top:536.07px;font-size:8.1px;color:#485a66;letter-spacing:-0.06px;">Performance Reviews</div>
<div class="t" style="left:976.8px;top:550.51px;font-size:8.1px;color:#485a66;letter-spacing:-0.06px;">Templates</div>
<svg class="r" style="left:959.5px;top:502.2px;" width="12.5" height="12" viewBox="0 0 12.5 12"><g fill="none" stroke="#161513" stroke-width="1.5"><rect x="0.9" y="0.9" width="10.4" height="10.4"/><path d="M6.1 0.9 V11.3 M6.1 6 H11.3"/></g></svg>
<svg class="r" style="left:1158px;top:223px;" width="14" height="16" viewBox="0 0 14 16"><path d="M7 15 L3.6 10.6 A5.6 5.6 0 1 1 10.4 10.6 Z" fill="#305a72"/><text x="7" y="9.8" font-family="Liberation Sans" font-weight="bold" font-size="8" fill="#fff" text-anchor="middle">?</text></svg>
<div class="r" style="left:1155px;top:242.2px;width:20.5px;height:39.5px;background:#2b5068;border-radius:10.25px;"></div>
<svg class="r" style="left:1155px;top:242px;" width="21" height="40" viewBox="0 0 21 40"><circle cx="10.3" cy="9.6" r="6.2" fill="none" stroke="#fff" stroke-width="1.1"/><text x="10.3" y="13" font-family="Liberation Serif" font-style="italic" font-weight="bold" font-size="9" fill="#fff" text-anchor="middle">i</text><circle cx="6.6" cy="23.4" r="1.05" fill="#8fb0c3"/><circle cx="6.6" cy="27.5" r="1.05" fill="#8fb0c3"/><circle cx="6.6" cy="31.599999999999998" r="1.05" fill="#8fb0c3"/><circle cx="10.55" cy="23.4" r="1.05" fill="#8fb0c3"/><circle cx="10.55" cy="27.5" r="1.05" fill="#8fb0c3"/><circle cx="10.55" cy="31.599999999999998" r="1.05" fill="#8fb0c3"/><circle cx="14.5" cy="23.4" r="1.05" fill="#8fb0c3"/><circle cx="14.5" cy="27.5" r="1.05" fill="#8fb0c3"/><circle cx="14.5" cy="31.599999999999998" r="1.05" fill="#8fb0c3"/></svg>
</body></html>
